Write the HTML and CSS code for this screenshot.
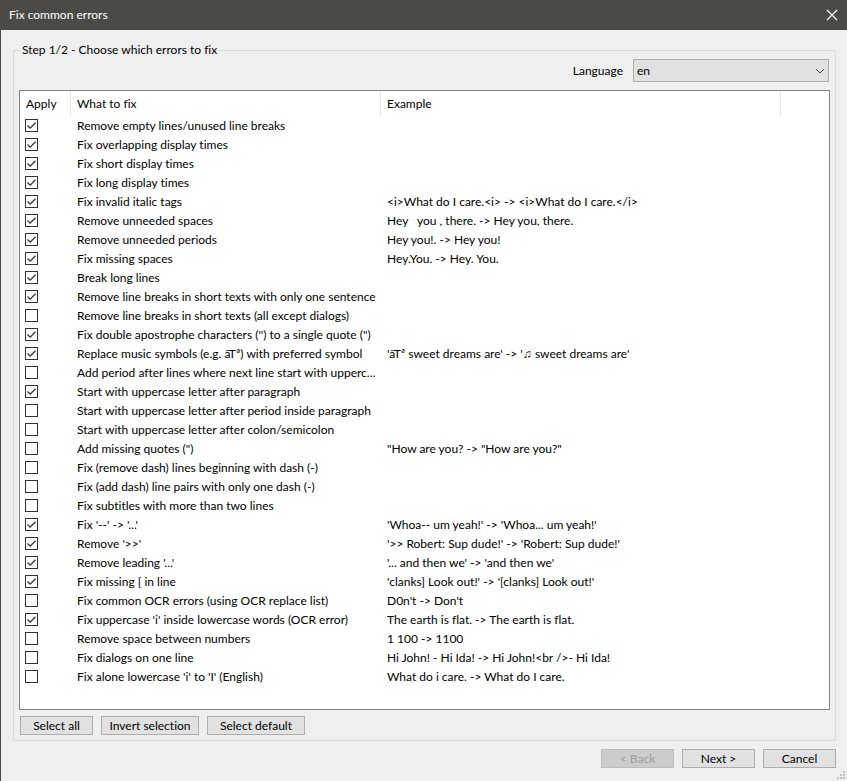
FILE: index.html
```html
<!DOCTYPE html>
<html lang="en">
<head>
  <meta charset="UTF-8">
  <title>Fix common errors</title>
  <link rel="stylesheet" href="styles.css">
</head>
<body>

  <header class="titlebar">
    <h1>Fix common errors</h1>
    <button class="close" aria-label="Close">
      <svg width="12" height="12" viewBox="0 0 12 12"><path d="M1 1L11 11M11 1L1 11" stroke="#fff" stroke-width="1.2" fill="none"/></svg>
    </button>
  </header>

  <form class="window">
    <fieldset class="step">
      <legend>Step 1/2 - Choose which errors to fix</legend>

      <div class="language">
        <label for="language">Language</label>
        <select id="language">
          <option>en</option>
        </select>
      </div>

      <div class="list">
        <table>
          <thead>
            <tr><th class="apply">Apply</th><th class="what">What to fix</th><th class="example">Example</th><th></th></tr>
          </thead>
          <tbody>
            <tr><td><input type="checkbox" id="f1" checked></td><td><label for="f1">Remove empty lines/unused line breaks</label></td><td></td></tr>
            <tr><td><input type="checkbox" id="f2" checked></td><td><label for="f2">Fix overlapping display times</label></td><td></td></tr>
            <tr><td><input type="checkbox" id="f3" checked></td><td><label for="f3">Fix short display times</label></td><td></td></tr>
            <tr><td><input type="checkbox" id="f4" checked></td><td><label for="f4">Fix long display times</label></td><td></td></tr>
            <tr><td><input type="checkbox" id="f5" checked></td><td><label for="f5">Fix invalid italic tags</label></td><td>&lt;i&gt;What do I care.&lt;i&gt; -&gt; &lt;i&gt;What do I care.&lt;/i&gt;</td></tr>
            <tr><td><input type="checkbox" id="f6" checked></td><td><label for="f6">Remove unneeded spaces</label></td><td>Hey   you , there. -&gt; Hey you, there.</td></tr>
            <tr><td><input type="checkbox" id="f7" checked></td><td><label for="f7">Remove unneeded periods</label></td><td>Hey you!. -&gt; Hey you!</td></tr>
            <tr><td><input type="checkbox" id="f8" checked></td><td><label for="f8">Fix missing spaces</label></td><td>Hey.You. -&gt; Hey. You.</td></tr>
            <tr><td><input type="checkbox" id="f9" checked></td><td><label for="f9">Break long lines</label></td><td></td></tr>
            <tr><td><input type="checkbox" id="f10" checked></td><td><label for="f10">Remove line breaks in short texts with only one sentence</label></td><td></td></tr>
            <tr><td><input type="checkbox" id="f11"></td><td><label for="f11">Remove line breaks in short texts (all except dialogs)</label></td><td></td></tr>
            <tr><td><input type="checkbox" id="f12" checked></td><td><label for="f12">Fix double apostrophe characters ('') to a single quote (")</label></td><td></td></tr>
            <tr><td><input type="checkbox" id="f13" checked></td><td><label for="f13">Replace music symbols (e.g. âTª) with preferred symbol</label></td><td>'âTª sweet dreams are' -&gt; '♫ sweet dreams are'</td></tr>
            <tr><td><input type="checkbox" id="f14"></td><td><label for="f14">Add period after lines where next line start with upperc...</label></td><td></td></tr>
            <tr><td><input type="checkbox" id="f15" checked></td><td><label for="f15">Start with uppercase letter after paragraph</label></td><td></td></tr>
            <tr><td><input type="checkbox" id="f16"></td><td><label for="f16">Start with uppercase letter after period inside paragraph</label></td><td></td></tr>
            <tr><td><input type="checkbox" id="f17"></td><td><label for="f17">Start with uppercase letter after colon/semicolon</label></td><td></td></tr>
            <tr><td><input type="checkbox" id="f18"></td><td><label for="f18">Add missing quotes (")</label></td><td>"How are you? -&gt; "How are you?"</td></tr>
            <tr><td><input type="checkbox" id="f19"></td><td><label for="f19">Fix (remove dash) lines beginning with dash (-)</label></td><td></td></tr>
            <tr><td><input type="checkbox" id="f20"></td><td><label for="f20">Fix (add dash) line pairs with only one dash (-)</label></td><td></td></tr>
            <tr><td><input type="checkbox" id="f21"></td><td><label for="f21">Fix subtitles with more than two lines</label></td><td></td></tr>
            <tr><td><input type="checkbox" id="f22" checked></td><td><label for="f22">Fix '--' -&gt; '...'</label></td><td>'Whoa-- um yeah!' -&gt; 'Whoa... um yeah!'</td></tr>
            <tr><td><input type="checkbox" id="f23" checked></td><td><label for="f23">Remove '&gt;&gt;'</label></td><td>'&gt;&gt; Robert: Sup dude!' -&gt; 'Robert: Sup dude!'</td></tr>
            <tr><td><input type="checkbox" id="f24" checked></td><td><label for="f24">Remove leading '...'</label></td><td>'... and then we' -&gt; 'and then we'</td></tr>
            <tr><td><input type="checkbox" id="f25" checked></td><td><label for="f25">Fix missing [ in line</label></td><td>'clanks] Look out!' -&gt; '[clanks] Look out!'</td></tr>
            <tr><td><input type="checkbox" id="f26"></td><td><label for="f26">Fix common OCR errors (using OCR replace list)</label></td><td>D0n't -&gt; Don't</td></tr>
            <tr><td><input type="checkbox" id="f27" checked></td><td><label for="f27">Fix uppercase 'i' inside lowercase words (OCR error)</label></td><td>The earth is flat. -&gt; The earth is flat.</td></tr>
            <tr><td><input type="checkbox" id="f28"></td><td><label for="f28">Remove space between numbers</label></td><td>1 100 -&gt; 1100</td></tr>
            <tr><td><input type="checkbox" id="f29"></td><td><label for="f29">Fix dialogs on one line</label></td><td>Hi John! - Hi Ida! -&gt; Hi John!&lt;br /&gt;- Hi Ida!</td></tr>
            <tr><td><input type="checkbox" id="f30"></td><td><label for="f30">Fix alone lowercase 'i' to 'I' (English)</label></td><td>What do i care. -&gt; What do I care.</td></tr>
          </tbody>
        </table>
      </div>

      <div class="buttons">
        <button type="button">Select all</button>
        <button type="button" class="wide">Invert selection</button>
        <button type="button" class="wide">Select default</button>
      </div>
    </fieldset>

    <div class="buttons footer">
      <button type="button" disabled>&lt; Back</button>
      <button type="button">Next &gt;</button>
      <button type="button">Cancel</button>
    </div>
  </form>

  <svg class="grip" width="8" height="8" viewBox="0 0 8 8" fill="#bfbfbf">
    <path d="M6 0h2v2h-2zM3 3h2v2h-2zM6 3h2v2h-2zM0 6h2v2h-2zM3 6h2v2h-2zM6 6h2v2h-2z"/>
  </svg>

</body>
</html>
```
FILE: styles.css
```css
* {
  box-sizing: border-box;
}

body {
  margin: 0;
  min-height: 100vh;
  display: flex;
  flex-direction: column;
  position: relative;
  background: #efefef;
  color: #000;
  font-family: Lato, "Open Sans", sans-serif;
  font-size: 12px;
  font-variant-ligatures: none;
  line-height: 16px;
}

button,
select {
  font: inherit;
  color: inherit;
}

.titlebar {
  display: flex;
  align-items: center;
  justify-content: space-between;
  height: 30px;
  padding: 0 9px;
  background: #4b4a47;
  color: #fff;
}

.titlebar h1 {
  margin: 0;
  font-size: 12px;
  font-weight: normal;
}

.close {
  display: flex;
  padding: 0;
  border: none;
  background: none;
}

.window {
  flex: 1;
  display: flex;
  flex-direction: column;
  padding: 12px 11px 13px 12px;
  border-left: 1px solid #4b4a47;
}

.step {
  min-width: 0;
  margin: 0;
  padding: 0 5px 5px;
  border: 1px solid #dcdcdc;
}

.step legend {
  margin-left: 1px;
  padding: 0 2px;
}

.language {
  display: flex;
  align-items: center;
  justify-content: flex-end;
  gap: 10px;
  padding: 1px 1px 8px 0;
}

.language select {
  appearance: none;
  width: 196px;
  height: 23px;
  padding: 0 3px;
  border: 1px solid #adadad;
  border-radius: 0;
  background: #e1e1e1 url("data:image/svg+xml,%3Csvg xmlns='http://www.w3.org/2000/svg' width='10' height='6'%3E%3Cpath d='M1 1l4 4 4-4' fill='none' stroke='%23444'/%3E%3C/svg%3E") no-repeat right 3px center;
}

.list {
  padding-bottom: 23px;
  border: 1px solid #828282;
  background: #fff;
}

table {
  width: 100%;
  table-layout: fixed;
  border-collapse: separate;
  border-spacing: 0;
}

th {
  height: 25px;
  padding: 0 6px;
  border-right: 1px solid #e5e5e5;
  font-weight: normal;
  text-align: left;
}

th:last-child {
  border-right: none;
}

.apply {
  width: 51px;
}

.what {
  width: 310px;
}

.example {
  width: 400px;
}

td {
  height: 19px;
  padding: 0 0 0 6px;
  white-space: pre;
}

td:first-child {
  padding-left: 5px;
}

input[type="checkbox"] {
  appearance: none;
  display: block;
  width: 13px;
  height: 13px;
  margin: 0;
  border: 1px solid #333;
  background: #fff;
}

input[type="checkbox"]:checked {
  background: #fff url("data:image/svg+xml,%3Csvg xmlns='http://www.w3.org/2000/svg' width='11' height='11'%3E%3Cpath d='M1.5 5.5l2.7 2.7 5.3-5.4' fill='none' stroke='%23333' stroke-width='1.3'/%3E%3C/svg%3E") no-repeat center;
}

.buttons {
  display: flex;
  gap: 8px;
  padding: 6px 1px 0;
}

.buttons button {
  width: 73px;
  height: 19px;
  padding: 0;
  border: 1px solid #adadad;
  background: #e1e1e1;
  line-height: 17px;
  white-space: nowrap;
}

.buttons .wide {
  width: 98px;
}

.buttons button:disabled {
  border-color: #bfbfbf;
  background: #ccc;
  color: #a0a0a0;
}

.footer {
  justify-content: flex-end;
  padding: 8px 0 0;
}

.grip {
  position: absolute;
  right: 2px;
  bottom: 2px;
}
```
